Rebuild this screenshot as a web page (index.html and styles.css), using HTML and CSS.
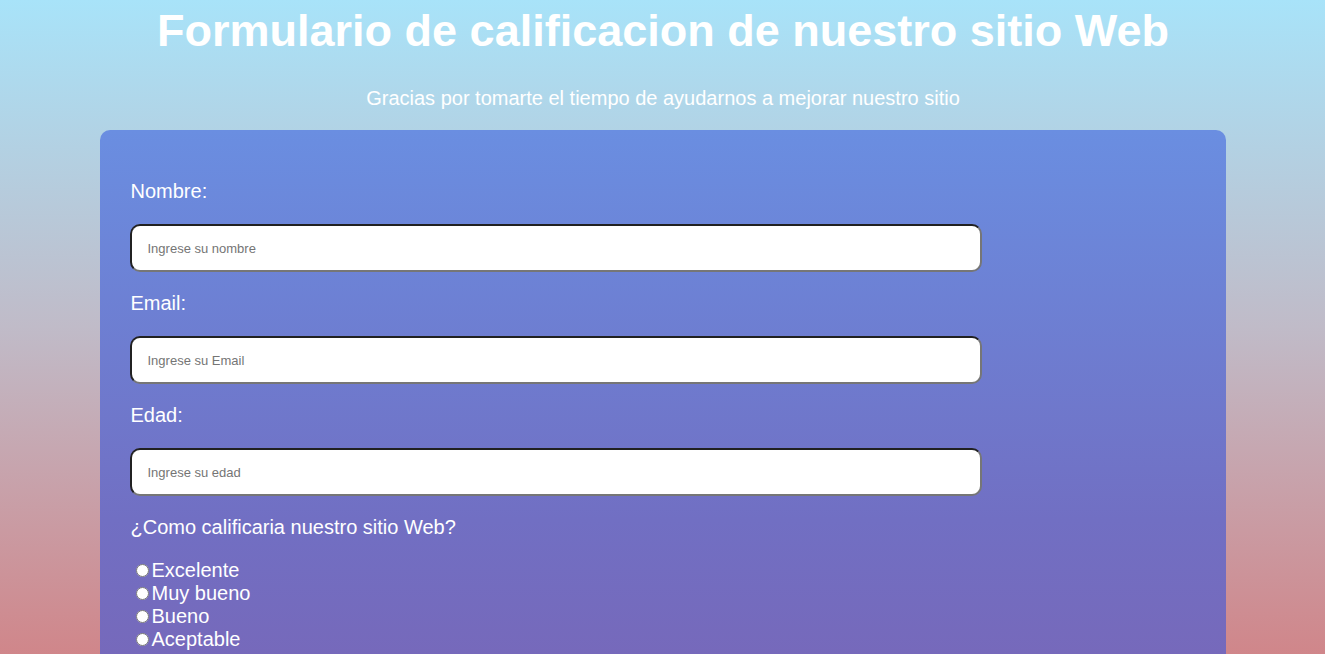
FILE: index.html
```html
<!DOCTYPE html>
<html lang="es">
<head>
<meta charset="utf-8">
<title>Formulario de calificacion</title>
<link rel="stylesheet" href="styles.css">
</head>
<body>
<header class="header">
  <h1 class="title">Formulario de calificacion de nuestro sitio Web</h1>
  <p class="subtitle">Gracias por tomarte el tiempo de ayudarnos a mejorar nuestro sitio</p>
</header>
<form class="card">
  <label class="label" for="nombre">Nombre:</label>
  <input class="field" id="nombre" type="text" placeholder="Ingrese su nombre">
  <label class="label" for="email">Email:</label>
  <input class="field" id="email" type="email" placeholder="Ingrese su Email">
  <label class="label" for="edad">Edad:</label>
  <input class="field" id="edad" type="number" placeholder="Ingrese su edad">
  <p class="label question">¿Como calificaria nuestro sitio Web?</p>
  <div class="options">
    <label class="option"><input type="radio" name="cal" value="excelente">Excelente</label>
    <label class="option"><input type="radio" name="cal" value="muybueno">Muy bueno</label>
    <label class="option"><input type="radio" name="cal" value="bueno">Bueno</label>
    <label class="option"><input type="radio" name="cal" value="aceptable">Aceptable</label>
  </div>
</form>
</body>
</html>
```

FILE: styles.css
```css
html, body {
  margin: 0;
  padding: 0;
}
body {
  font-family: "Liberation Sans", Arial, sans-serif;
  color: #fff;
  min-height: 654px;
  background: linear-gradient(to bottom, #a8e3f9 0px, #c0bbc8 327px, #d0868a 654px) fixed;
}
.header {
  text-align: center;
  padding-top: 3px;
  padding-left: 1px;
}
.title {
  margin: 0;
  font-size: 45px;
  font-weight: bold;
  line-height: 55px;
}
.subtitle {
  margin: 29px 0 0;
  font-size: 20px;
  line-height: 23px;
}
.card {
  width: 1126px;
  box-sizing: border-box;
  margin: 20px auto 0;
  padding: 30px 30px 20px;
  border-radius: 10px 10px 0 0;
  background: linear-gradient(to bottom, #6a8ee1 130px, #716fc3 520px, #7669bb 654px) fixed;
  display: flex;
  flex-direction: column;
  align-items: flex-start;
}
.label {
  display: block;
  margin: 20px 0 21px 1px;
  font-size: 20px;
  line-height: 23px;
}
.question {
  margin-bottom: 20px;
}
.field {
  width: 852px;
  height: 48px;
  box-sizing: border-box;
  border: 2px inset #767676;
  border-radius: 10px;
  padding: 0 16px;
  font-family: "Liberation Sans", Arial, sans-serif;
  font-size: 13px;
  background: #fff;
  color: #333;
}
.field::placeholder {
  color: #757575;
}
.options {
  display: flex;
  flex-direction: column;
}
.option {
  font-size: 20px;
  line-height: 23px;
}
.option input {
  margin: 3px 3px 0 6px;
}
```
